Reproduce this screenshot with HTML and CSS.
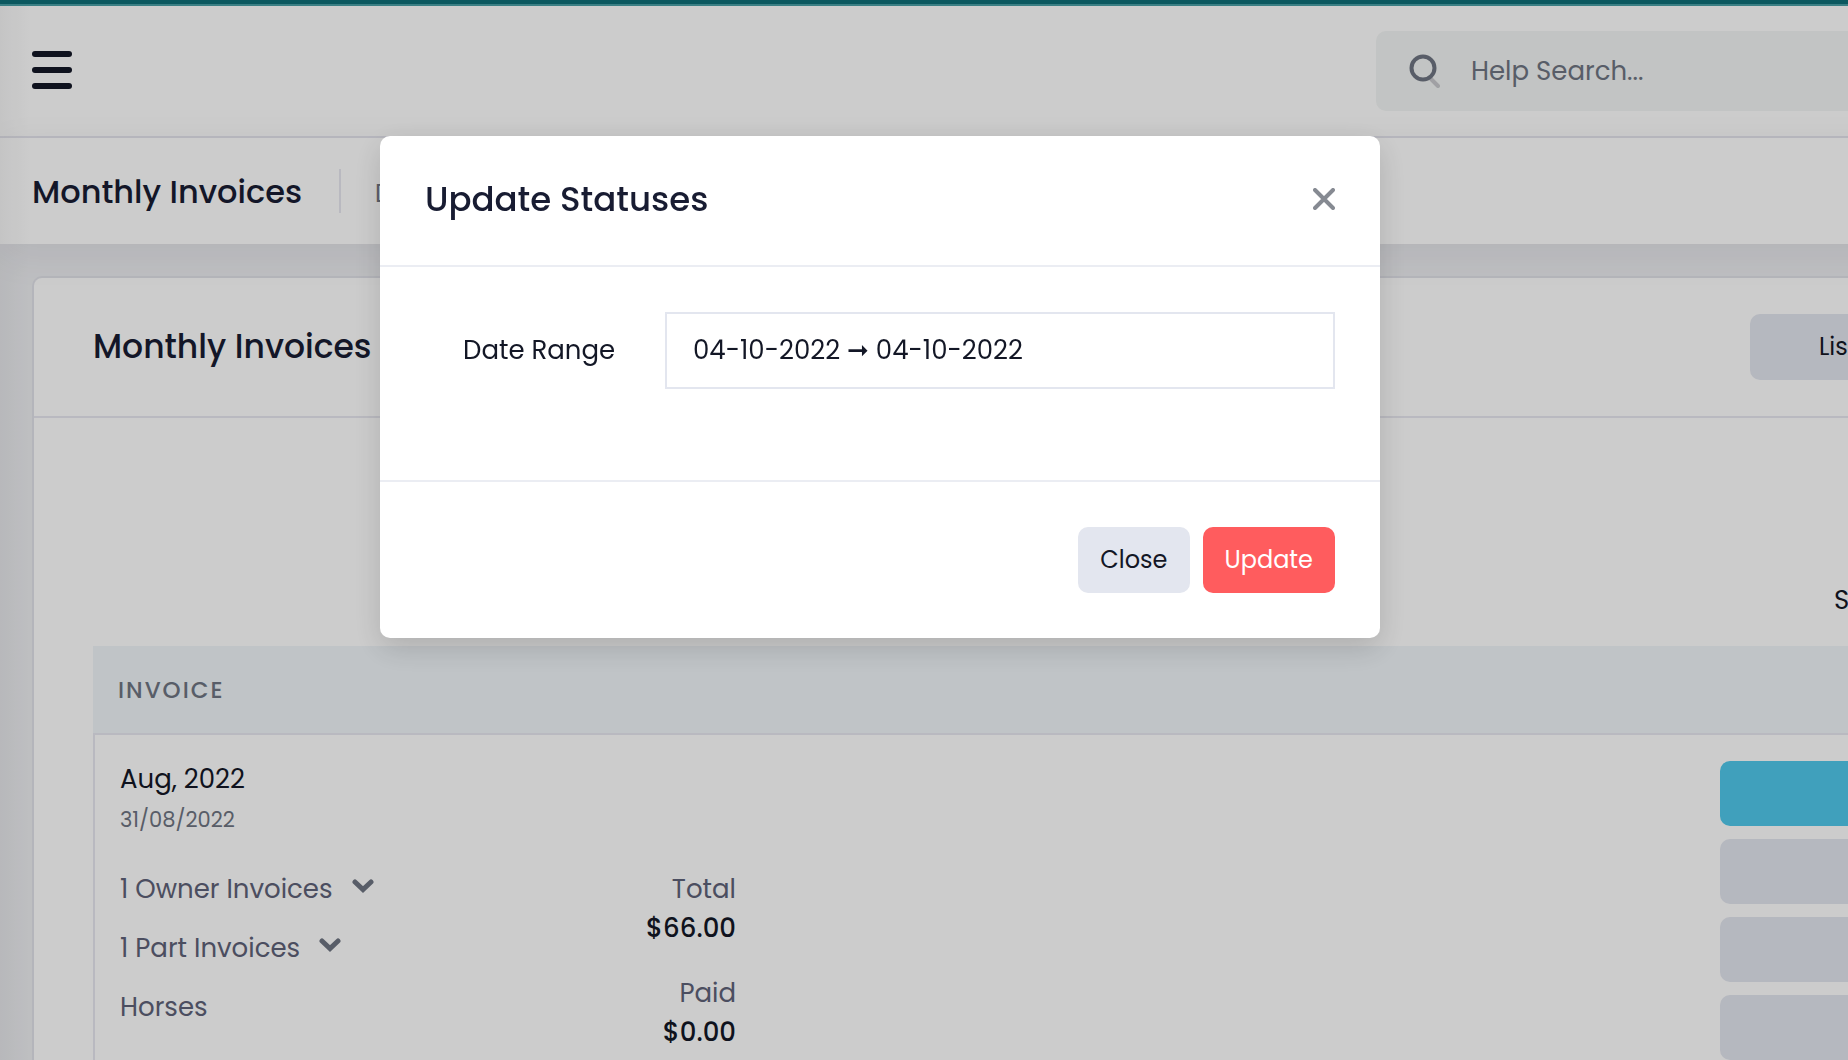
FILE: index.html
```html
<!DOCTYPE html>
<html lang="en">
<head>
<meta charset="utf-8">
<title>Monthly Invoices</title>
<link rel="stylesheet" href="styles.css">
</head>
<body>
<div class="page">
  <header class="topbar">
    <button class="menu-button" aria-label="Menu"><span></span><span></span><span></span></button>
    <label class="search">
      <svg class="search-icon" viewBox="0 0 32 34" aria-hidden="true">
        <path d="M23 25l7 7" stroke="#c8c9cd" stroke-width="4" stroke-linecap="round"/>
        <circle cx="15" cy="14" r="11.500" fill="none" stroke="#6f7582" stroke-width="4"/>
      </svg>
      <input class="search-input" type="text" placeholder="Help Search..." aria-label="Help Search">
    </label>
  </header>
  <div class="subheader">
    <h1 class="page-title">Monthly Invoices</h1>
    <span class="divider"></span>
    <span class="crumb">D</span>
  </div>
  <main class="content">
    <section class="card">
      <div class="card-header">
        <h2 class="card-title">Monthly Invoices</h2>
        <button class="button list-button">Lis</button>
      </div>
      <div class="card-body">
        <div class="table-tools"><span>S</span></div>
        <table class="invoices">
          <thead>
            <tr><th class="col-invoice">INVOICE</th><th class="col-total"></th><th class="col-space"></th><th class="col-actions"></th></tr>
          </thead>
          <tbody>
            <tr>
              <td>
                <div class="month">Aug, 2022</div>
                <div class="date">31/08/2022</div>
                <ul class="links">
                  <li><a href="#">1 Owner Invoices <svg class="chevron" viewBox="0 0 22 14" aria-hidden="true"><path d="M3 3l8 7.500L19 3"/></svg></a></li>
                  <li><a href="#">1 Part Invoices <svg class="chevron" viewBox="0 0 22 14" aria-hidden="true"><path d="M3 3l8 7.500L19 3"/></svg></a></li>
                  <li><a href="#">Horses</a></li>
                </ul>
              </td>
              <td>
                <dl class="sums">
                  <div><dt>Total</dt><dd>$66.00</dd></div>
                  <div><dt>Paid</dt><dd>$0.00</dd></div>
                </dl>
              </td>
              <td></td>
              <td>
                <div class="actions">
                  <button class="action action-primary" aria-label="View"></button>
                  <button class="action" aria-label="Edit"></button>
                  <button class="action" aria-label="Send"></button>
                  <button class="action" aria-label="Export"></button>
                </div>
              </td>
            </tr>
          </tbody>
        </table>
      </div>
    </section>
  </main>
</div>
<div class="backdrop">
  <div class="modal" role="dialog" aria-labelledby="modal-title">
    <div class="modal-header">
      <h2 class="modal-title" id="modal-title">Update Statuses</h2>
      <button class="close-icon" aria-label="Close dialog">
        <svg viewBox="0 0 22 22" aria-hidden="true"><path d="M2 2l18 18M20 2L2 20"/></svg>
      </button>
    </div>
    <div class="modal-body">
      <label class="field-label" for="range">Date Range</label>
      <input class="field" id="range" type="text" value="04-10-2022 ➞ 04-10-2022">
    </div>
    <div class="modal-footer">
      <button class="button">Close</button>
      <button class="button button-danger">Update</button>
    </div>
  </div>
</div>
</body>
</html>
```
FILE: styles.css
```css
* { box-sizing: border-box; }

body {
  margin: 0;
  height: 100vh;
  overflow: hidden;
  background: #eeeff2;
  color: #131726;
  font: 26px/40px Poppins, "DejaVu Sans", sans-serif;
}

h1, h2, ul, dl, dd { margin: 0; padding: 0; }
button, input { font: inherit; color: inherit; border: 0; }
button { cursor: pointer; padding: 0; }
a { color: inherit; text-decoration: none; }

.page {
  position: relative;
  height: 100vh;
  overflow: hidden;
}

/* Shade cast by the collapsed side menu */
.page::after {
  content: "";
  position: absolute;
  inset: 6px auto 0 0;
  width: 30px;
  background: linear-gradient(to right, rgba(30, 30, 40, .04), transparent);
}

/* Header */
.topbar {
  display: flex;
  align-items: center;
  justify-content: space-between;
  height: 138px;
  padding: 2px 0 0 32px;
  background: #fff;
  border-top: 4px solid #0e6f77;
  border-bottom: 2px solid #e8e8f0;
  box-shadow: inset 0 2px #499fa6;
}

.menu-button {
  display: flex;
  flex-direction: column;
  gap: 10px;
  width: 40px;
  padding-bottom: 2px;
  background: none;
}
.menu-button span { height: 6px; border-radius: 3px; background: #131726; }

.search {
  display: flex;
  align-items: center;
  gap: 31px;
  width: 472px;
  height: 80px;
  padding-left: 32px;
  border-radius: 10px 0 0 10px;
  background: #f3f6f5;
}
.search-icon { width: 32px; height: 34px; flex: none; fill: none; }
.search-input { flex: 1; min-width: 0; padding: 0; background: none; outline: 0; }
.search-input::placeholder { color: #6f7582; opacity: 1; }

.subheader {
  position: relative;
  display: flex;
  align-items: center;
  gap: 34px;
  height: 106px;
  margin-right: -60px;
  padding-left: 32px;
  background: #fff;
  box-shadow: 0 10px 40px rgba(40, 35, 60, .07);
}
.page-title, .card-title, .modal-title { font-size: 33px; line-height: 44px; font-weight: 500; color: #181c32; }
.page-title { padding: 2px 3px 0 0; font-size: 32px; }
.modal-title { padding-bottom: 4px; font-size: 34px; }
.divider { width: 2px; height: 44px; background: #e8e8f0; }
.crumb { padding-top: 6px; font-size: 24px; color: #6f7582; }

/* Card */
.content { padding: 32px 0 0 32px; }
.card {
  border: 2px solid #e2e3ea;
  border-right: 0;
  border-radius: 10px 0 0 0;
  background: #fff;
}
.card-header {
  display: flex;
  align-items: center;
  justify-content: space-between;
  height: 140px;
  padding-left: 59px;
  border-bottom: 2px solid #e8e8f0;
}
.button {
  height: 66px;
  padding: 0 22px;
  border-radius: 10px;
  background: #e3e6ef;
  font-size: 24px;
}
.button-danger { background: #ff5c5e; color: #fff; }
.list-button { width: 98px; padding: 0 0 0 69px; border-radius: 10px 0 0 10px; text-align: left; }

.card-body { padding-left: 59px; }
.table-tools { display: flex; justify-content: flex-end; align-items: flex-end; height: 228px; padding-bottom: 26px; overflow: hidden; }
.table-tools span { width: 14px; white-space: nowrap; }

.invoices { width: 100%; border-collapse: separate; border-spacing: 0; table-layout: fixed; }
.col-invoice { width: 350px; }
.col-total { width: 293px; }
.col-actions { width: 128px; }
.invoices th {
  height: 89px;
  padding: 0 25px;
  background: #f0f5f9;
  border-bottom: 2px solid #e8e8f0;
  color: #6f7582;
  font-size: 23px;
  font-weight: 500;
  letter-spacing: 2px;
  text-align: left;
}
.invoices td { padding: 0; vertical-align: top; }
.invoices td:first-child { padding: 24px 0 0 25px; border-left: 2px solid #e8e8f0; }
.date { padding-top: 1px; font-size: 21px; color: #6f7582; }
.links { list-style: none; margin-top: 29px; color: #5e6278; }
.links li { height: 59px; }
.links a { display: flex; align-items: center; gap: 19px; }
.chevron { width: 22px; height: 14px; margin-bottom: 6px; fill: none; stroke: #6f7582; stroke-width: 5; stroke-linecap: round; }

.sums { padding-top: 134px; text-align: right; }
.sums div { height: 104px; }
.sums dt { color: #5e6278; }
.sums dd { line-height: 38px; font-weight: 500; }

.actions { display: flex; flex-direction: column; gap: 13px; padding-top: 26px; }
.action { height: 65px; border-radius: 10px 0 0 10px; background: #e3e6ef; }
.action-primary { background: #50c9eb; }

/* Dialog */
.backdrop {
  position: fixed;
  inset: 0;
  padding: 136px 0 0 380px;
  background: rgba(0, 0, 0, .2);
}
.modal {
  width: 1000px;
  max-width: 100%;
  border-radius: 10px;
  background: #fff;
  box-shadow: 0 10px 30px rgba(0, 0, 0, .15);
}
.modal-header {
  display: flex;
  align-items: center;
  justify-content: space-between;
  height: 131px;
  padding: 0 45px;
  border-bottom: 2px solid #ebedf3;
}
.close-icon { display: flex; padding-bottom: 4px; background: none; }
.close-icon svg { width: 22px; height: 22px; fill: none; stroke: #868a92; stroke-width: 4; stroke-linecap: round; }
.modal-body { display: flex; align-items: center; padding: 45px 45px 91px; }
.field-label { flex: 1; padding: 0 0 2px 38px; }
.field {
  width: 670px;
  height: 77px;
  padding: 0 26px;
  border: 2px solid #e3e6ef;
  background: #fff;
}
.modal-footer {
  display: flex;
  justify-content: flex-end;
  gap: 13px;
  padding: 45px;
  border-top: 2px solid #ebedf3;
}
```
